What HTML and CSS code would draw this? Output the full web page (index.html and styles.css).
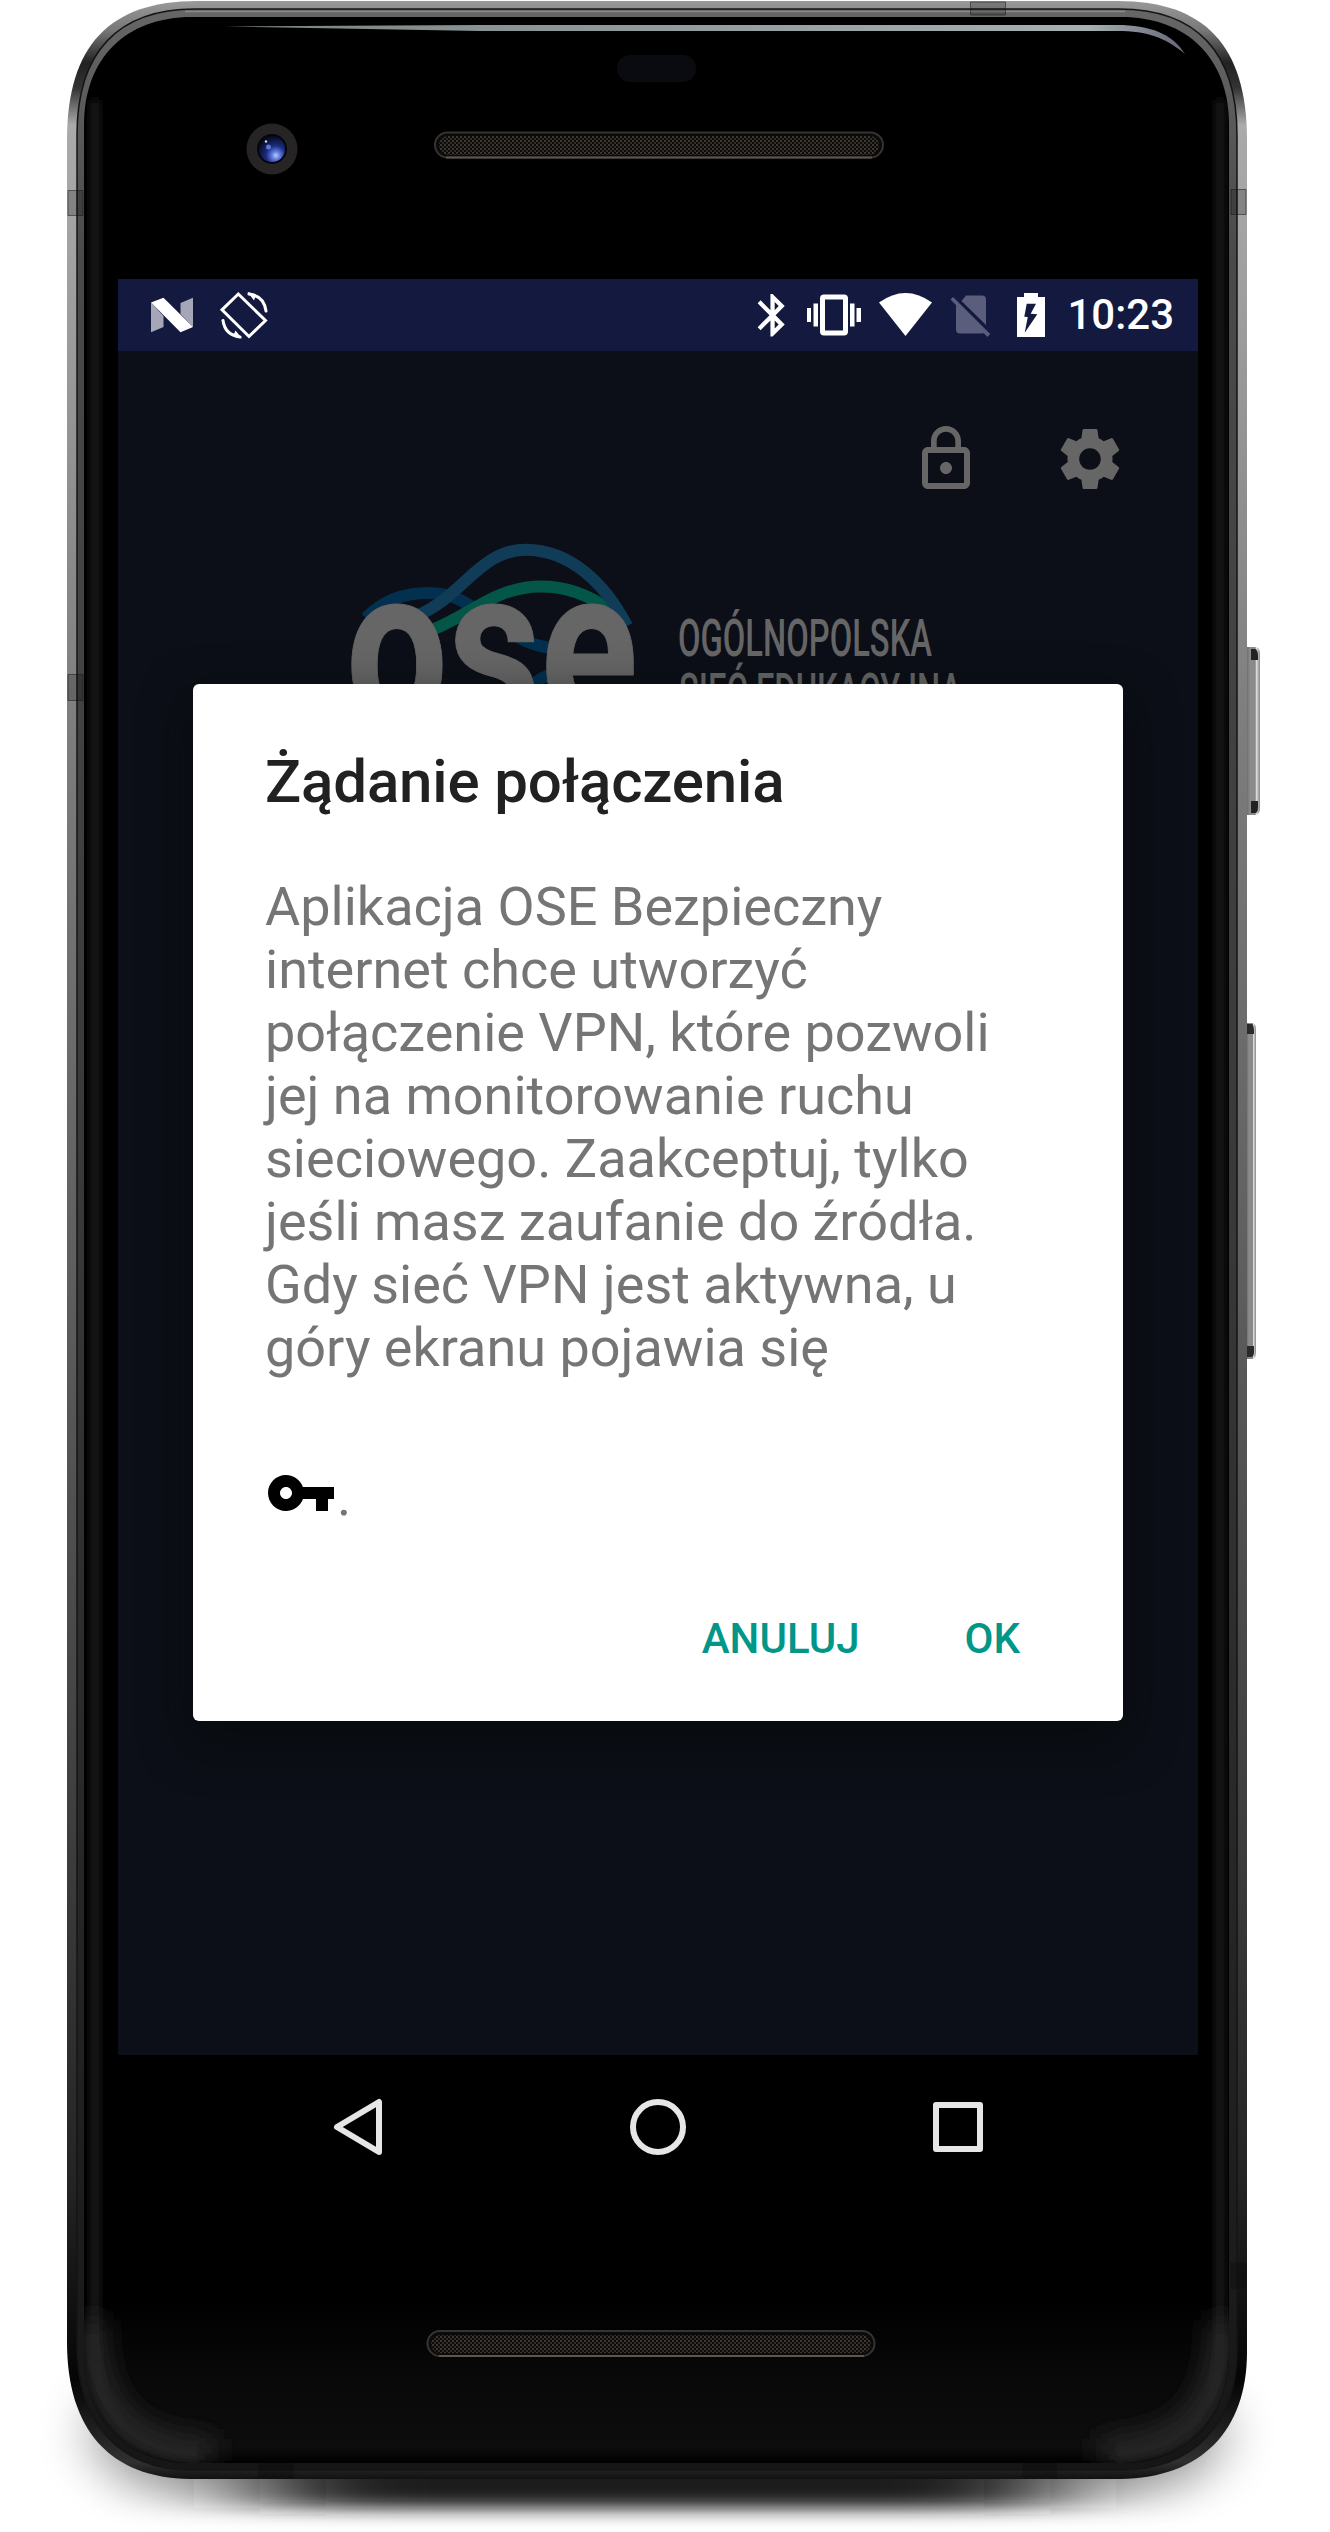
FILE: index.html
```html
<!DOCTYPE html>
<html lang="pl">
<head>
<meta charset="utf-8">
<title>Żądanie połączenia</title>
<link rel="stylesheet" href="styles.css">
</head>
<body>
<div class="phone">
  <svg class="body" viewBox="0 0 1330 2532" aria-hidden="true">
    <defs>
      <linearGradient id="metal" x1="0" y1="0" x2="0" y2="1">
        <stop offset="0" stop-color="#999"/><stop offset=".012" stop-color="#777"/><stop offset=".025" stop-color="#222"/><stop offset=".035" stop-color="#333"/><stop offset=".05" stop-color="#aaa"/><stop offset=".1" stop-color="#a2a2a2"/><stop offset=".3" stop-color="#7c7c7c"/><stop offset=".5" stop-color="#606060"/><stop offset=".75" stop-color="#3c3c3c"/><stop offset=".88" stop-color="#242424"/><stop offset=".96" stop-color="#050505"/><stop offset=".993" stop-color="#303030"/><stop offset="1" stop-color="#111"/>
      </linearGradient>
      <linearGradient id="rim" x1="0" y1="0" x2="0" y2="1">
        <stop offset="0" stop-color="#666"/><stop offset=".1" stop-color="#4a4a4a"/><stop offset=".5" stop-color="#383838"/><stop offset="1" stop-color="#161616"/>
      </linearGradient>
      <linearGradient id="chin" x1="0" y1="0" x2="0" y2="1">
        <stop offset="0" stop-color="#000"/><stop offset=".5" stop-color="#090909"/><stop offset=".9" stop-color="#0d0d0d"/><stop offset="1" stop-color="#000"/>
      </linearGradient>
      <linearGradient id="shine" x1="0" y1="0" x2="1" y2="0">
        <stop offset="0" stop-color="#778483"/><stop offset=".3" stop-color="#8b9494"/><stop offset=".9" stop-color="#a5b0b0"/><stop offset="1" stop-color="#667"/>
      </linearGradient>
      <linearGradient id="button" x1="0" y1="0" x2="1" y2="0">
        <stop offset="0" stop-color="#666"/><stop offset=".3" stop-color="#8c8c8c"/><stop offset=".65" stop-color="#888"/><stop offset=".75" stop-color="#dadada"/><stop offset="1" stop-color="#888"/>
      </linearGradient>
      <radialGradient id="lens" cx=".65" cy=".75" r=".75">
        <stop offset="0" stop-color="#b9caff"/><stop offset=".22" stop-color="#5c78d8"/><stop offset=".5" stop-color="#1b2c80"/><stop offset="1" stop-color="#070a1c"/>
      </radialGradient>
      <pattern id="mesh" width="4" height="4" patternUnits="userSpaceOnUse">
        <rect width="4" height="4" fill="#0c0b0a"/><rect width="2" height="2" fill="#3c3731"/><rect x="2" y="2" width="2" height="2" fill="#302c27"/>
      </pattern>
      <filter id="ground" x="-50%" y="-80%" width="200%" height="260%"><feGaussianBlur stdDeviation="70 9"/></filter>
      <filter id="ambient" x="-30%" y="-60%" width="160%" height="220%"><feGaussianBlur stdDeviation="28 20"/></filter>
      <filter id="soft" x="-10%" y="-10%" width="120%" height="120%"><feGaussianBlur stdDeviation="4"/></filter>
      <filter id="wide" x="-10%" y="-50%" width="120%" height="200%"><feGaussianBlur stdDeviation="13"/></filter>
      <clipPath id="glass"><path d="M84 125C84 58 126 17 192 17H1121C1187 17 1229 58 1229 125V2352C1229 2420 1187 2463 1121 2463H192C126 2463 84 2420 84 2352Z"/></clipPath>
    </defs>

    <rect x="95" y="2380" width="1125" height="108" rx="60" fill="#000" opacity=".38" filter="url(#ambient)"/>
    <rect x="260" y="2420" width="790" height="88" fill="#1c1c1c" filter="url(#ground)"/>

    <path d="M1246 647h9q5 0 5 7v154q0 7-5 7h-9z" fill="url(#button)"/>
    <path d="M1251 649h4q3 1 3 7v4h-7zM1251 801h7v6q0 6-3 6h-4z" fill="#222"/>
    <path d="M1246 1023h6q4 0 4 6v323q0 7-4 7h-6z" fill="url(#button)"/>
    <path d="M1247 1024h5q2 1 2 8v2h-7zM1247 1346h7v6q0 5-3 5h-4z" fill="#2a2a2a"/>

    <path d="M67 140C67 45 110 1 197 1H1118C1204 1 1247 45 1247 140V2352C1247 2430 1202 2478 1120 2479H190C110 2478 67 2430 67 2342Z" fill="url(#metal)"/>
    <path d="M77 135C77 52 118 9 195 9H1119C1196 9 1237 52 1237 135V2350C1237 2423 1194 2470 1120 2470H192C119 2470 77 2423 77 2344Z" fill="url(#rim)" stroke="#151515" stroke-width="1.500"/>
    <path d="M84 125C84 58 126 17 192 17H1121C1187 17 1229 58 1229 125V2352C1229 2420 1187 2463 1121 2463H192C126 2463 84 2420 84 2352Z" fill="#000"/>
    <path d="M185 11.500H1125" stroke="#8a8a8a" stroke-width="1.500"/>

    <g clip-path="url(#glass)">
      <rect x="84" y="2300" width="1145" height="163" fill="url(#chin)"/>
      <path d="M95 100V2345C95 2415 132 2455 200 2455M1220 100V2345C1220 2415 1182 2455 1114 2455" fill="none" stroke="#1d1d1d" stroke-width="9" filter="url(#soft)"/>
      <path d="M92 2320C92 2405 126 2450 215 2450M1222 2320C1222 2405 1188 2450 1099 2450" fill="none" stroke="#2a2a2a" stroke-width="24" filter="url(#wide)"/>
    </g>

    <g fill="#000" fill-opacity=".2" stroke="#111" stroke-opacity=".5">
      <path d="M68 190.500h15v25H68zM1231 189.500h15v25h-15zM970.500 2h35v13h-35zM68 674.500h15v26H68zM1231 2262.500h15v26h-15zM258.500 2463h35v15h-35zM1022.500 2463h34v15h-34z"/>
    </g>

    <path d="M224 26.500L480 25H1117C1150 25 1173 34 1185 54C1166 38 1148 31 1117 31H480Z" fill="url(#shine)"/>
    <rect x="617" y="55" width="79" height="27" rx="13" fill="#090b10"/>

    <circle cx="272" cy="149" r="25.500" fill="#262424"/>
    <circle cx="272" cy="149" r="15" fill="#050510"/>
    <circle cx="272" cy="149" r="13" fill="url(#lens)"/>
    <circle cx="268.500" cy="147" r="2.500" fill="#5d76cf"/>
    <circle cx="266" cy="141.500" r="1.200" fill="#cdd"/>

    <g stroke-width="2">
      <rect x="435" y="132.500" width="448" height="25" rx="12.500" fill="#0c0b0b" stroke="#37332f"/>
      <rect x="439" y="136" width="440" height="19" rx="9" fill="url(#mesh)"/>
      <path d="M446 157.500H872" stroke="#5b554e"/>
      <rect x="427.500" y="2331" width="447" height="25" rx="12.500" fill="#0c0b0b" stroke="#37332f"/>
      <rect x="431" y="2335" width="440" height="18" rx="9" fill="url(#mesh)"/>
      <path d="M439 2356H864" stroke="#5b554e"/>
    </g>
  </svg>

  <div class="screen">
    <header class="status">
      <svg class="notices" viewBox="145 279 130 72" aria-hidden="true">
        <path d="M151 302.500L163.500 316V327L151 332.300ZM180.500 303L193 297.700V327L180.500 314Z" fill="#a5a7b8"/>
        <path d="M151 302.500L163.500 297.700L193 327L180.500 332.300Z" fill="#fff"/>
        <path d="M238.300 294L265.500 320.500L249 336.500L222 309.800Z" fill="none" stroke="#fff" stroke-width="3"/>
        <path d="M249 294Q264 296 266 311M223 320.500Q225 335 240 337" fill="none" stroke="#fff" stroke-width="3" stroke-linecap="round"/>
        <path d="M247.500 292L254 300.500L255.500 296.500L260 299L255 294ZM242 338.500L235.500 330.500L234 334L229.500 332L234.500 336.500Z" fill="#fff"/>
      </svg>
      <div class="system">
        <svg class="indicators" viewBox="750 279 300 72" aria-hidden="true">
          <g fill="#fff">
            <path transform="translate(747 289.700) scale(2.130)" d="M17.710 7.710L12 2h-1v7.590L6.410 5 5 6.410 10.590 12 5 17.590 6.410 19 11 14.410V22h1l5.710-5.710-4.300-4.290 4.300-4.290zM13 5.830l1.880 1.880L13 9.590V5.830zm1.880 10.460L13 18.170v-3.760l1.880 1.880z"/>
            <path d="M807 308h4v14h-4zM813.500 303.500h4.500v23h-4.500zM850 303.500h4.500v23H850zM856.500 308h4.500v14h-4.500z"/>
            <path fill-rule="evenodd" d="M824 294.500h20q4 0 4 4v33q0 4-4 4h-20q-4 0-4-4v-33q0-4 4-4zM825 299.500v31h18v-31z"/>
            <path d="M879 302.500Q905.500 283.500 932 302.500L905.500 336Z"/>
            <path fill-rule="evenodd" d="M1024 293h14v4h7v40h-28v-40h7zM1026.700 303.700L1024.300 316.700L1027.800 317L1024.700 332.700L1037.300 314.300L1030.700 313.700L1036 303.700Z"/>
          </g>
          <path d="M966 295.500h16q4 0 4 4v25.500L961.500 301ZM956 303.500L985 332.500Q984 333.500 982 333.500H960q-4 0-4-4ZM950.500 299.500L953 297L990.200 334L987.500 337Z" fill="#5a5d7b"/>
        </svg>
        <span class="clock">10:23</span>
      </div>
    </header>

    <main class="app">
      <div class="actions">
        <svg viewBox="0 0 24 24" aria-hidden="true"><path d="M12 17c1.100 0 2-.9 2-2s-.9-2-2-2-2 .9-2 2 .9 2 2 2zm6-9h-1V6c0-2.760-2.240-5-5-5S7 3.240 7 6v2H6c-1.100 0-2 .9-2 2v10c0 1.100.9 2 2 2h12c1.100 0 2-.9 2-2V10c0-1.100-.9-2-2-2zM8.900 6c0-1.710 1.390-3.100 3.100-3.100s3.100 1.390 3.100 3.100v2H8.900V6zM18 20H6V10h12v10z"/></svg>
        <svg viewBox="0 0 24 24" aria-hidden="true"><path d="M19.430 12.980c.04-.32.07-.64.07-.98s-.03-.66-.07-.98l2.110-1.650c.19-.15.24-.42.12-.64l-2-3.460c-.12-.22-.39-.3-.61-.22l-2.490 1c-.52-.4-1.080-.73-1.690-.98l-.38-2.650C14.460 2.180 14.250 2 14 2h-4c-.25 0-.46.18-.49.42l-.38 2.650c-.61.25-1.170.59-1.690.98l-2.490-1c-.23-.09-.49 0-.61.22l-2 3.460c-.13.22-.07.49.12.64l2.110 1.650c-.04.32-.07.65-.07.98s.03.66.07.98l-2.110 1.650c-.19.15-.24.42-.12.64l2 3.460c.12.22.39.3.61.22l2.490-1c.52.4 1.080.73 1.690.98l.38 2.650c.03.24.24.42.49.42h4c.25 0 .46-.18.49-.42l.38-2.650c.61-.25 1.170-.59 1.690-.98l2.490 1c.23.09.49 0 .61-.22l2-3.460c.12-.22.07-.49-.12-.64l-2.110-1.650zM12 15.600c-1.980 0-3.600-1.620-3.600-3.600s1.620-3.600 3.600-3.600 3.600 1.620 3.600 3.600-1.620 3.600-3.600 3.600z"/></svg>
      </div>
      <svg class="logo" viewBox="340 535 640 220">
        <g fill="none" stroke-width="12">
          <path d="M366 618C383 600 405 593 428 593C452 593 465 602 480 612M515 635Q530 645 550 648M532 686Q542 676 552 675" stroke="#02304e"/>
          <path d="M434 629C470 615 496 586.500 541 586.500C568 586.500 590 596 608 609" stroke="#035648"/>
          <path d="M418 615C462 597 480 549.700 526 549.700C570 550 605 583 627 626" stroke="#113c58"/>
        </g>
        <g fill="#666" stroke="#666" stroke-linejoin="round" font-family="Roboto, sans-serif">
          <text x="346" y="724" textLength="292" lengthAdjust="spacingAndGlyphs" font-weight="700" font-size="222" stroke-width="1">ose</text>
          <g font-weight="500" font-size="52" stroke-width="0">
            <text x="678" y="656" textLength="254" lengthAdjust="spacingAndGlyphs">OGÓLNOPOLSKA</text>
            <text x="679" y="710" textLength="283" lengthAdjust="spacingAndGlyphs">SIEĆ EDUKACYJNA</text>
          </g>
        </g>
      </svg>

      <section class="dialog" role="dialog">
        <h1 class="title">Żądanie połączenia</h1>
        <p class="message">Aplikacja OSE Bezpieczny<br>internet chce utworzyć<br>połączenie VPN, które pozwoli<br>jej na monitorowanie ruchu<br>sieciowego. Zaakceptuj, tylko<br>jeśli masz zaufanie do źródła.<br>Gdy sieć VPN jest aktywna, u<br>góry ekranu pojawia się</p>
        <p class="key">
          <svg viewBox="0 0 24 24" aria-hidden="true"><path d="M12.650 10C11.830 7.670 9.610 6 7 6c-3.310 0-6 2.690-6 6s2.690 6 6 6c2.610 0 4.830-1.670 5.650-4H17v4h4v-4h2v-4H12.650zM7 14c-1.100 0-2-.9-2-2s.9-2 2-2 2 .9 2 2-.9 2-2 2z"/></svg><span>.</span>
        </p>
        <div class="buttons"><span>ANULUJ</span><span>OK</span></div>
      </section>
    </main>

    <nav class="navbar">
      <svg viewBox="0 0 72 72" aria-hidden="true"><path d="M15 36L57 11V61Z"/></svg>
      <svg viewBox="0 0 72 72" aria-hidden="true"><circle cx="36" cy="36" r="25"/></svg>
      <svg viewBox="0 0 72 72" aria-hidden="true"><rect x="14" y="14" width="44" height="44"/></svg>
    </nav>
  </div>
</div>
</body>
</html>
```
FILE: styles.css
```css
* { box-sizing: border-box; }
body { margin: 0; background: #fff; font-family: Roboto, "Noto Sans", sans-serif; }

.phone {
  position: relative;
  width: 1330px;
  height: 2532px;
  padding: 279px 0 0 118px;
  overflow: hidden;
}
.body { position: absolute; inset: 0; width: 1330px; height: 2532px; }

.screen {
  position: relative;
  display: flex;
  flex-direction: column;
  width: 1080px;
  height: 1920px;
  background: #000;
}

.status {
  display: flex;
  justify-content: space-between;
  height: 72px;
  padding: 0 24px 0 27px;
  background: #14193f;
  color: #fff;
}
.notices { width: 130px; height: 72px; }
.system { display: flex; align-items: center; gap: 17px; }
.indicators { width: 300px; height: 72px; }
.clock { font-size: 42px; font-weight: 500; line-height: 74px; }

.app {
  position: relative;
  flex: 1;
  background: #0c0f17;
}
.actions {
  display: flex;
  justify-content: flex-end;
  gap: 72px;
  padding: 72px 72px 0 0;
}
.actions svg { width: 72px; height: 72px; fill: #666; }
.logo { display: block; width: 640px; height: 220px; margin: 40px 0 0 222px; }

.dialog {
  position: absolute;
  left: 75px;
  top: 333px;
  width: 930px;
  height: 1037px;
  padding: 63px 72px 0;
  background: #fff;
  border-radius: 6px;
  box-shadow: 0 18px 50px rgba(6, 8, 8, .7);
}
.title { margin: 0; font-size: 60px; font-weight: 500; line-height: 70px; letter-spacing: -.15px; color: #212121; white-space: nowrap; }
.message { margin: 58px 0 0; font-size: 54px; line-height: 63px; color: #757575; white-space: nowrap; }
.key { display: flex; align-items: flex-end; height: 72px; margin: 78px 0 0; font-size: 54px; line-height: 65px; color: #757575; }
.key svg { width: 72px; height: 72px; fill: #000; }
.buttons {
  display: flex;
  justify-content: flex-end;
  gap: 105px;
  margin-top: 85px;
  padding-right: 31px;
  font-size: 42px;
  font-weight: 500;
  line-height: 49px;
  color: #009688;
}

.navbar { display: flex; justify-content: center; align-items: center; gap: 228px; height: 144px; }
.navbar svg { width: 72px; height: 72px; fill: none; stroke: #e6e6e6; stroke-width: 6; stroke-linejoin: round; }
```
